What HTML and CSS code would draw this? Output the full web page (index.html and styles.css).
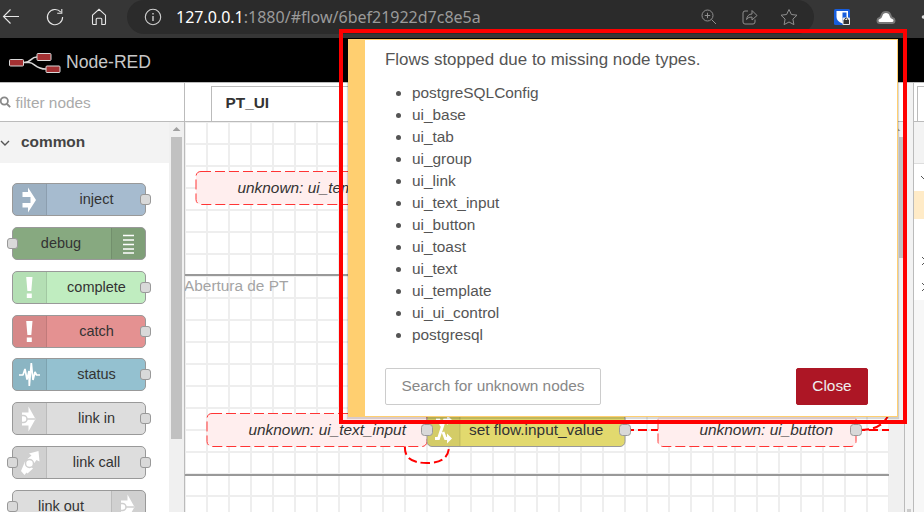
FILE: index.html
```html
<!DOCTYPE html>
<html lang="en">
<head>
<meta charset="utf-8">
<title>Node-RED</title>
<link rel="stylesheet" href="styles.css">
</head>
<body>
<div class="browser">
  <svg class="nav" width="127" height="34" fill="none" stroke="#e6e6e6" stroke-width="1.1">
    <path d="M19 16.500H3.500M10.500 9.500l-7 7 7 7"/>
    <path d="M60.800 12.200A7.600 7.600 0 1 0 62.600 17M61.800 9v4.300h-4.600"/>
    <path d="M92.500 15.200L99 9.300l6.500 5.900v8.300q0 1-1 1h-2.700v-5.200q0-1-1-1h-3.600q-1 0-1 1v5.200h-2.700q-1 0-1-1z"/>
  </svg>
  <div class="address">
    <svg class="info" width="18" height="18" fill="none" stroke="#d0d0d0" stroke-width="1.1"><circle cx="9" cy="9" r="7.700"/><path d="M9 8v5M9 5v1.400" stroke-width="1.400"/></svg>
    <span class="url"><b>127.0.0.1</b>:1880/#flow/6bef21922d7c8e5a</span>
    <svg class="tools" width="104" height="20" fill="none" stroke="#8f8f8f" stroke-width="1">
      <circle cx="8.500" cy="8.500" r="5.500"/><path d="M12.500 12.500l4.500 4.500M5.800 8.500h5.400M8.500 5.800v5.400"/>
      <path d="M49 4h-3q-2 0-2 2v9q0 2 2 2h8q2 0 2-2v-2.500M47.500 12.500q1-5.500 5.500-5.500V3.500l5 5-5 4.500V10q-3.500-.5-5.500 2.500z"/>
      <path d="M90 2.500l2.400 5 5.600.7-4.100 3.900 1 5.500-4.900-2.600-4.900 2.600 1-5.500L82 8.200l5.600-.7z"/>
    </svg>
  </div>
  <svg class="ext" width="104" height="34">
    <rect x="14" y="9" width="16" height="16" rx="1.500" fill="#175ddc"/>
    <path d="M16.500 11H28v6q0 4-5.500 6.500Q16.500 21 16.500 17z" fill="#fff"/><path d="M22.500 12.500h4V17q0 2.500-4 4.800z" fill="#175ddc"/>
    <rect x="22.500" y="17.500" width="7.500" height="7.500" rx="1" fill="#e8e8e8"/><rect x="23.500" y="20" width="5.500" height="4" fill="#333"/><path d="M24.800 20v-1q1.500-2 3 0v1" fill="none" stroke="#333"/>
    <path d="M60 23q-2.500 0-2.500-2.500 0-1.900 2-2.500 1.500-.5 2-2.500.8-3.500 4.500-3.500t4.500 3.500q.5 2 2 2.500 2 .6 2 2.500 0 2.500-2.500 2.500z" fill="#fff" stroke="#777" stroke-width="2"/>
    <circle cx="103.500" cy="17" r="1.800" fill="#ddd"/>
  </svg>
</div>

<header class="header">
  <svg width="54" height="22" fill="#a33032" stroke="#d8d8d8">
    <path d="M16 11.500C24 11.500 22 6 29 6M16 11.500h5C27 11.500 27 18 38 18" fill="none" stroke-width="1.600"/>
    <rect x="1.500" y="8.500" width="14" height="6.500" rx="1"/><rect x="29" y="2.500" width="14" height="7" rx="1"/><rect x="38" y="15" width="14" height="6.500" rx="1"/>
  </svg>
  <span>Node-RED</span>
</header>

<main class="main">
  <aside class="palette">
    <div class="filter">
      <svg width="12" height="14" fill="none" stroke="#888" stroke-width="1.800"><circle cx="4.300" cy="6" r="3.600"/><path d="M7 9l3.200 3.200"/></svg>
      <span>filter nodes</span>
    </div>
    <div class="palette-body">
      <div class="palette-list">
        <div class="category"><svg width="12" height="10" fill="none" stroke="#555" stroke-width="1.400"><path d="M1 3l4 4 4-4"/></svg><span>common</span></div>
        <div class="nodes">
          <div class="node inject"><i><svg width="32" height="32" fill="#fff"><path d="M9.500 8H15V3.500L23 16l-8 12.500V23.500H9.500v-4.500H17.500v-6H9.500z"/></svg></i><span>inject</span><u class="out"></u></div>
          <div class="node debug"><u class="in"></u><span>debug</span><i><svg width="32" height="32" stroke="#fff" stroke-width="1.500"><path d="M11 7.500h11M11 12h11M11 16.500h11M11 21h11M11 25h11"/></svg></i></div>
          <div class="node complete"><i><svg width="32" height="32" fill="#fff"><path d="M13.200 5h6.300l-1.200 14h-3.900zM13.800 21.500h5v4.500h-5z"/></svg></i><span>complete</span><u class="out"></u></div>
          <div class="node catch"><i><svg width="32" height="32" fill="#fff"><path d="M13.200 5h6.300l-1.200 14h-3.900zM13.800 21.500h5v4.500h-5z"/></svg></i><span>catch</span><u class="out"></u></div>
          <div class="node status"><i><svg width="32" height="32" fill="none" stroke="#fff" stroke-width="1.700"><path d="M6 16h4l2-5.500 2.500 10L18 5" stroke="none"/><path d="M6 16h4l2-6 2 10.500L16 12l.3 15L18.300 4l1.700 17 2-8 1.500 3H27" stroke-linejoin="bevel"/></svg></i><span>status</span><u class="out"></u></div>
          <div class="node link"><i><svg width="32" height="32"><path d="M15.500 3.500L22.500 16l-7 12.500V22.500H9V9.500h6.500z" fill="#fff"/><path d="M8 12.500h2.500a3.500 3.500 0 0 1 0 7H8M14 16h8" fill="none" stroke="#cfcfcf" stroke-width="1.500"/></svg></i><span>link in</span><u class="out"></u></div>
          <div class="node link"><u class="in"></u><i><svg width="32" height="32" fill="#fff"><path d="M16 6.500l9.500-2.500 1 10.500-3-1.500-3 4-6-5 4-3.500zM12 14.500l8 7-5.500 5-1-1-2 2.500L8 24z"/><circle cx="16.500" cy="16.500" r="4" fill="#fff" stroke="#cfcfcf" stroke-width="1.500"/></svg></i><span>link call</span><u class="out"></u></div>
          <div class="node link"><u class="in"></u><span>link out</span><i><svg width="32" height="32"><path d="M15.500 3.500L22.500 16l-7 12.500V22.500H9V9.500h6.500z" fill="#fff"/><path d="M8 12.500h2.500a3.500 3.500 0 0 1 0 7H8M14 16h8" fill="none" stroke="#cfcfcf" stroke-width="1.500"/></svg></i></div>
        </div>
      </div>
      <div class="scroll"><b></b><div class="thumb"></div></div>
    </div>
  </aside>

  <section class="workspace">
    <div class="tabs"><div class="tab">PT_UI</div></div>
    <div class="chart">
      <svg class="canvas" width="704" height="390" viewBox="185 122 704 390">
        <defs><pattern id="grid" x="206" y="143" width="22" height="22" patternUnits="userSpaceOnUse"><path d="M0 1h22M1 0v22" stroke="#eee" stroke-width="2"/></pattern></defs>
        <rect x="185" y="122" width="704" height="390" fill="url(#grid)"/>
        <path d="M185 275h704M185 475h704" stroke="#999" stroke-width="2"/>
        <text class="group" x="184" y="291">Abertura de PT</text>
        <path class="wire" d="M405 446C404 458 412 463 427 463C441 463 449 458 449 446M625 430h34M856 430h33M860 430C875 430 884 425 889 414"/>
        <g class="unknown">
          <rect x="196" y="171.500" width="220" height="33" rx="5"/>
          <rect x="207" y="413.500" width="220" height="33" rx="5"/>
          <rect x="658" y="413.500" width="198" height="33" rx="5"/>
        </g>
        <rect x="427" y="413.500" width="198" height="33" rx="5" fill="#e2d96e" stroke="#999"/>
        <path d="M460 414v32h-28q-4.500 0-4.500-4.500V414z" fill="#000" fill-opacity=".06"/><path d="M460 414v32" stroke="#000" stroke-opacity=".12"/>
        <path d="M435 438.500h3.500L444.500 420h4M436 420h3l2.500 6M443 432l2.500 6.500h3" fill="none" stroke="#fff" stroke-width="2.800"/><path d="M447 415l5 5-5 5zM447 433.500l5 5-5 5z" fill="#fff"/>
        <g class="unknown-text"><text x="237.500" y="193">unknown: ui_template</text><text x="248.500" y="435">unknown: ui_text_input</text><text x="699.500" y="435">unknown: ui_button</text></g>
        <text class="label" x="469" y="435">set flow.input_value</text>
        <g fill="#d9d9d9" stroke="#999"><rect x="421.500" y="424.500" width="11" height="11" rx="3"/><rect x="619.500" y="424.500" width="11" height="11" rx="3"/><rect x="850.500" y="424.500" width="11" height="11" rx="3"/></g>
      </svg>
      <div class="scroll"><b></b><div class="thumb"></div></div>
    </div>
  </section>

  <div class="separator"><i></i></div>
  <aside class="sidebar">
    <div class="side-tabs"><div></div></div>
    <div class="side-tools"></div>
    <div class="side-row"><svg width="10" height="28" fill="none" stroke="#555"><path d="M7 12l4 4"/></svg></div>
    <div class="side-row selected"></div>
    <div class="side-row blank"></div>
    <div class="side-row arrow"><svg width="10" height="26" fill="none" stroke="#555"><path d="M8 9l4 4-4 4"/></svg></div>
    <div class="side-row arrow"><svg width="10" height="26" fill="none" stroke="#555"><path d="M8 9l4 4-4 4"/></svg></div>
    <div class="side-footer"></div>
  </aside>
</main>

<div class="notification">
  <p>Flows stopped due to missing node types.</p>
  <ul>
    <li>postgreSQLConfig</li><li>ui_base</li><li>ui_tab</li><li>ui_group</li><li>ui_link</li><li>ui_text_input</li>
    <li>ui_button</li><li>ui_toast</li><li>ui_text</li><li>ui_template</li><li>ui_ui_control</li><li>postgresql</li>
  </ul>
  <div class="actions"><button>Search for unknown nodes</button><button class="primary">Close</button></div>
</div>
<div class="highlight"></div>
</body>
</html>
```
FILE: styles.css
```css
* { box-sizing: border-box; }
html, body { margin: 0; width: 924px; height: 512px; overflow: hidden; }
body { position: relative; display: flex; flex-direction: column; background: #fff; font: 15.4px "Liberation Sans", Arial, sans-serif; color: #444; }
svg { display: block; flex: none; }

.browser { display: flex; flex: none; height: 38px; background: #363636; }
.nav, .ext { flex: none; }
.ext { width: 104px; margin-left: 6px; }
.address { display: flex; align-items: center; width: 687px; height: 34px; padding: 0 11px 0 17px; background: #2b2b2b; border-radius: 17px; }
.url { margin-left: 14px; font: 16px/34px "Noto Sans", sans-serif; color: #9a9a9a; white-space: nowrap; }
.url b { font-weight: 400; color: #fff; }
.tools { margin-left: auto; }

.header { display: flex; align-items: center; flex: none; height: 44px; padding: 3px 0 0 8px; background: #000; color: #c7c7c7; font-size: 17.6px; }
.header span { margin-left: 4px; padding-top: 1px; }

.main { display: flex; flex: none; height: 430px; border-top: 1px solid #bbb; }
.palette { display: flex; flex-direction: column; width: 185px; border-right: 1px solid #bbb; }
.filter { display: flex; align-items: center; flex: none; height: 39px; border-bottom: 1px solid #bbb; color: #aaa; }
.filter span { margin-left: 3.500px; padding-top: 2px; }
.palette-body { display: flex; flex: 1; min-height: 0; }
.palette-list { width: 169px; overflow: hidden; }
.category { display: flex; align-items: center; height: 41px; background: #f3f3f3; font-weight: bold; color: #444; }
.category span { margin: -2px 0 0 9px; }
.nodes { display: flex; flex-direction: column; gap: 10.860px; padding: 20px 0 0 12px; }
.node { position: relative; display: flex; flex: none; width: 134px; height: 33px; border: 1px solid #999; border-radius: 5px; color: #333; font-size: 14.500px; }
.node > span { flex: 1; text-align: center; line-height: 31px; }
.node i + span { padding-left: 1px; }
.node u + span { padding-right: 2px; }
.node i { flex: none; width: 34px; background: rgba(0, 0, 0, .06); border-right: 1px solid rgba(0, 0, 0, .1); border-radius: 4px 0 0 4px; }
.node span + i { border-right: 0; border-left: 1px solid rgba(0, 0, 0, .1); border-radius: 0 4px 4px 0; }
.node u { position: absolute; top: 10px; width: 11px; height: 11px; background: #d9d9d9; border: 1px solid #999; border-radius: 3px; }
.out { right: -6px; }
.in { left: -6px; }
.inject { background: #a6bbcf; }
.debug { background: #87a980; }
.complete { background: #c0edc0; }
.catch { background: #e49191; }
.status { background: #94c1d0; }
.link { background: #ddd; }

.scroll { flex: none; width: 15px; padding: 5px 2px 0; background: #f0f0f0; }
.scroll b { display: block; width: 8px; height: 4px; margin: 0 auto 6px; background: #a0a0a0; clip-path: polygon(50% 0, 100% 100%, 0 100%); }
.thumb { width: 11px; height: 302px; background: #c1c1c1; }
.chart .thumb { height: 121px; width: 5px; margin-left: 8px; }

.workspace { display: flex; flex-direction: column; width: 719px; }
.tabs { display: flex; align-items: flex-end; flex: none; height: 39px; padding-left: 26px; border-bottom: 1px solid #bbb; }
.tab { width: 200px; height: 35px; padding-left: 13.500px; border: 1px solid #bbb; border-bottom: 0; line-height: 32px; font-weight: bold; color: #333; }
.chart { display: flex; flex: 1; min-height: 0; }
.unknown rect { fill: #fee; stroke: #ff3535; stroke-dasharray: 10 4; }
.wire { fill: none; stroke: #f00; stroke-width: 2; stroke-dasharray: 9 4; }
.canvas text { font-size: 15.4px; fill: #333; }
.canvas .group { fill: #a4a4a4; }
.unknown-text { font-style: italic; }

.separator { display: flex; align-items: flex-end; justify-content: center; width: 10px; background: #f3f3f3; border-left: 1px solid #bbb; border-right: 1px solid #bbb; }
.separator i { width: 4px; height: 3px; background: #ccc; }
.sidebar { display: flex; flex-direction: column; width: 10px; overflow: hidden; }
.side-tabs { height: 39px; padding: 3px 0 0 3px; border-bottom: 1px solid #bbb; }
.side-tabs div { height: 35px; border-left: 1px solid #bbb; border-top: 1px solid #bbb; }
.side-tools { height: 42px; background: #f3f3f3; border-bottom: 1px solid #ddd; }
.side-row { height: 27px; }
.side-row.selected { height: 28px; background: #ffebc7; }
.side-row.blank { height: 29px; }
.side-row.arrow { height: 26px; }
.side-footer { flex: 1; background: #f7f7f7; }

.notification { position: absolute; left: 348px; top: 39px; width: 550px; height: 378px; padding: 12px 29px 0 20px; background: #fff; border: 1px solid #ffcf70; border-left-width: 17px; box-shadow: 0 1px 1px 1px rgba(0, 0, 0, .15); color: #555; }
.notification p { margin: 0; font-size: 16.950px; line-height: 16px; }
.notification ul { margin: 14px 0 22px; padding-left: 27px; line-height: 22px; }
.actions { display: flex; justify-content: space-between; }
.actions button { height: 37px; width: 216px; padding: 0 0 2px; background: #fff; border: 1px solid #ccc; border-radius: 2px; font: 15.4px "Liberation Sans", Arial, sans-serif; color: #888; white-space: nowrap; }
.actions .primary { width: 72px; background: #ad1625; border-color: #ad1625; color: #eee; }
.highlight { position: absolute; left: 339px; top: 29px; width: 568px; height: 395px; border: 4px solid #f00; }
```
